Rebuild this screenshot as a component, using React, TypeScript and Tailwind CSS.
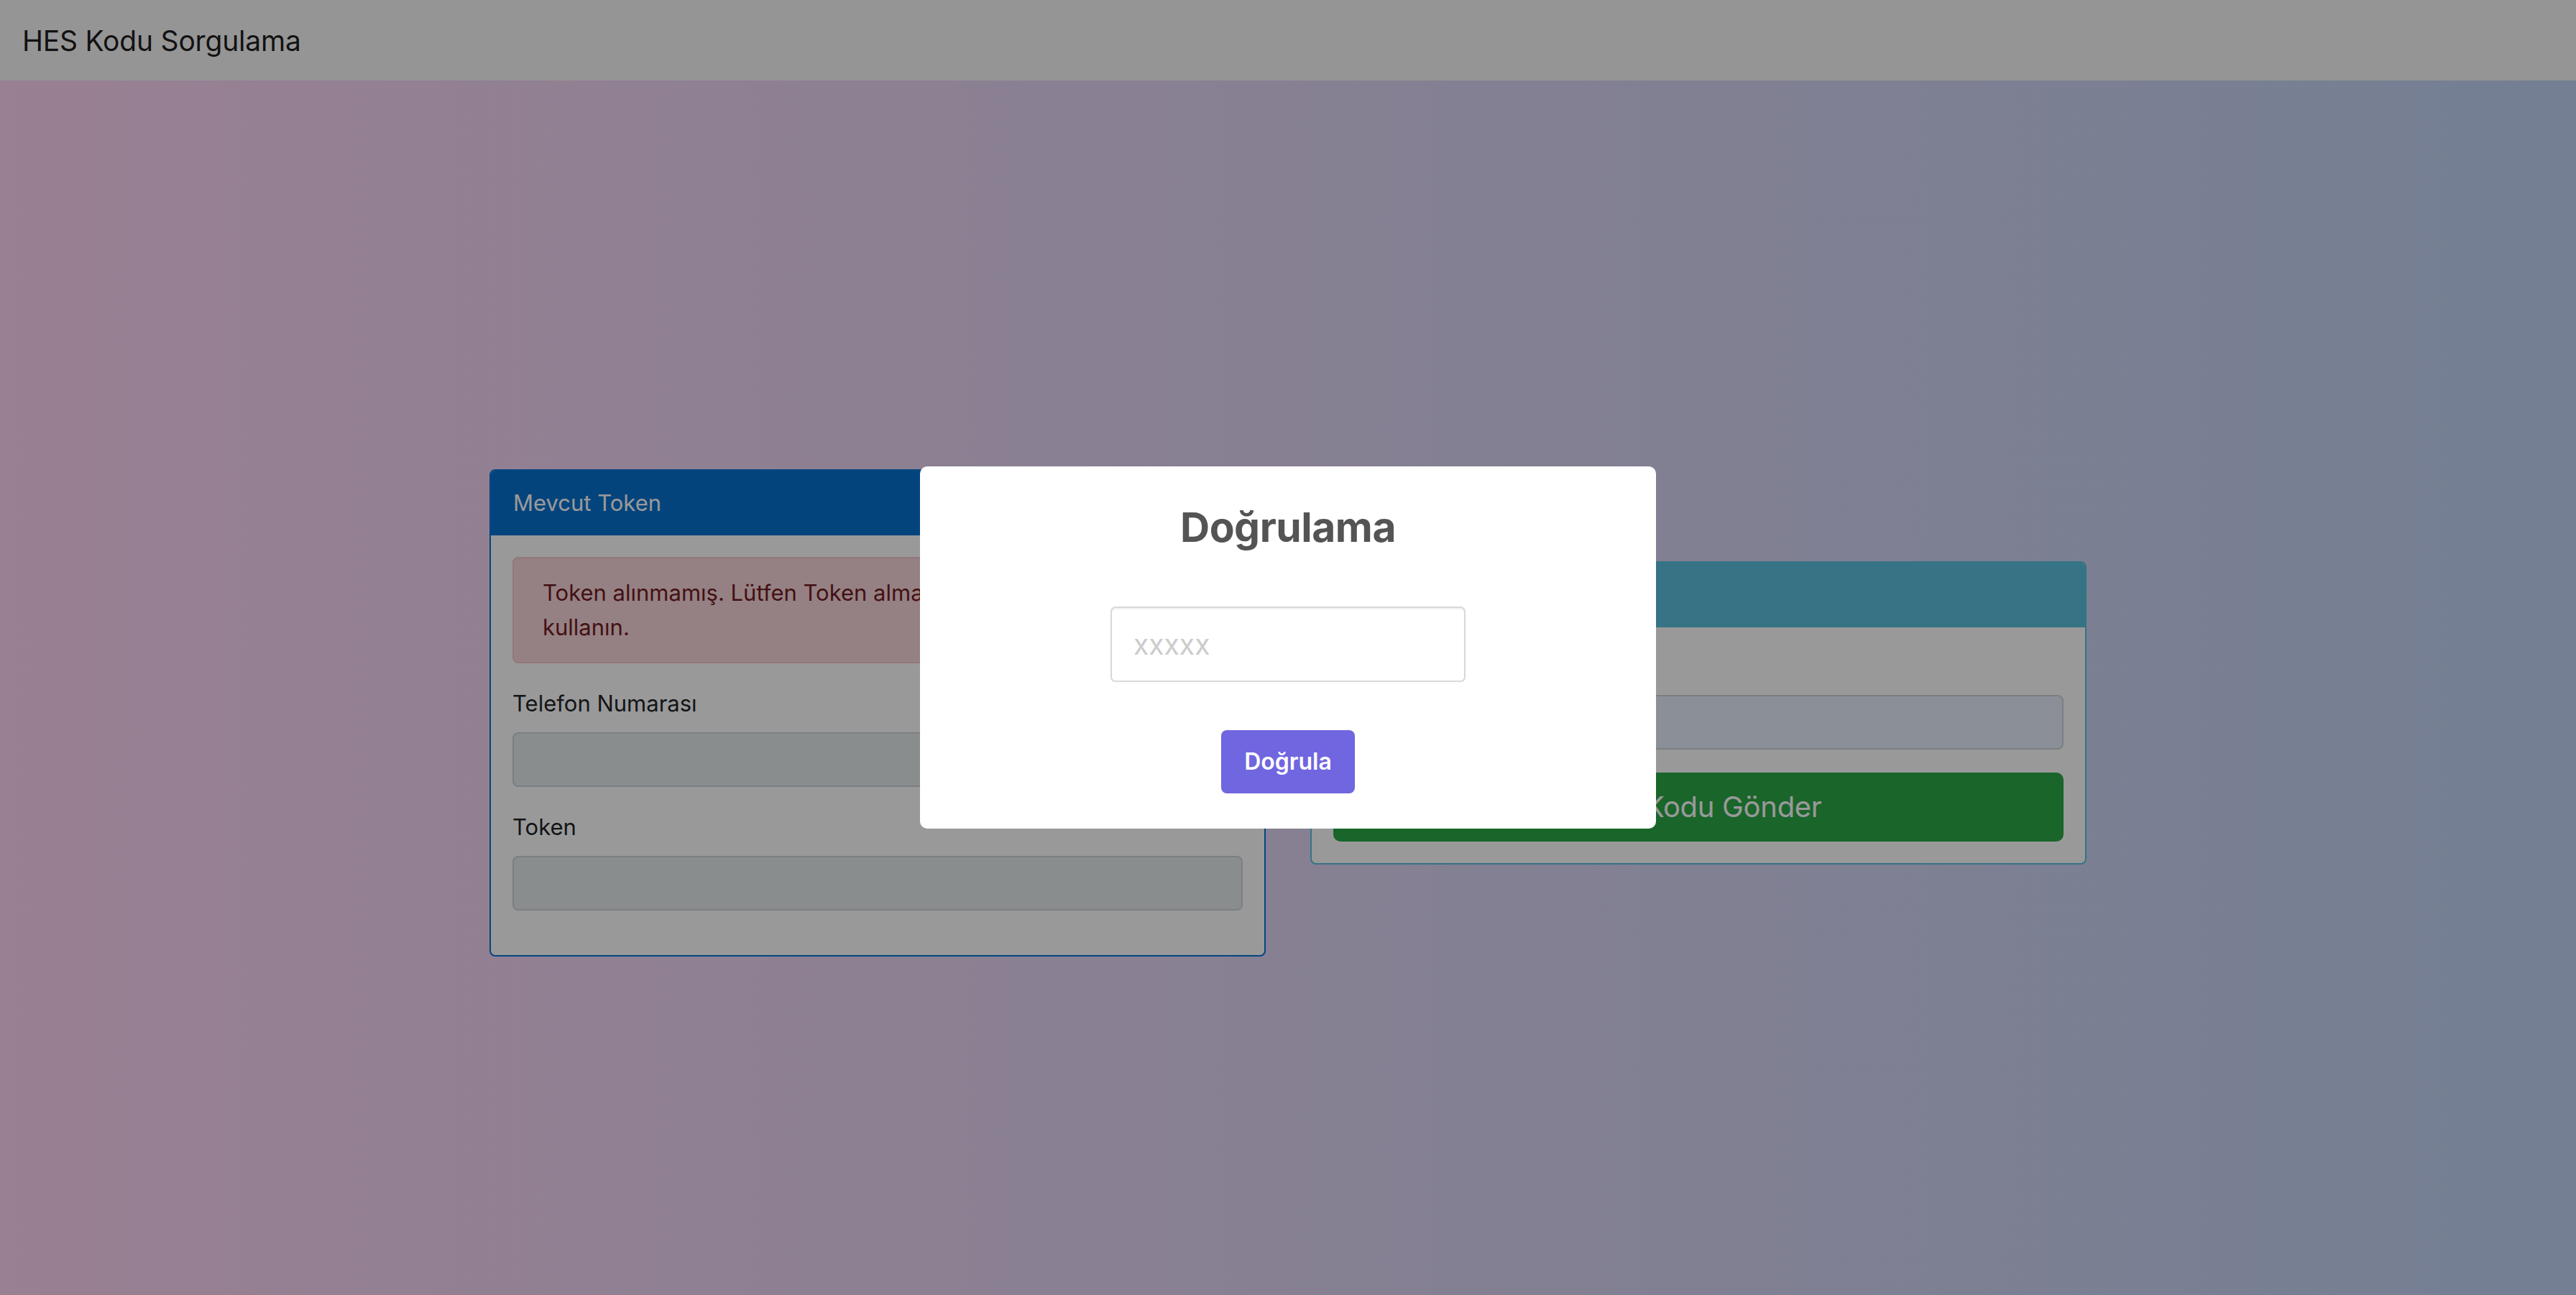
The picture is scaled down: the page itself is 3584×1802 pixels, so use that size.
import React from 'react';

function Navbar() {
  return (
    <nav className="h-[112px] bg-[#f8f9fa] flex items-center pl-[31px]">
      <span className="text-[39px] text-black/90 leading-none tracking-[-0.2px]">HES Kodu Sorgulama</span>
    </nav>
  );
}

function TokenCard() {
  return (
    <div className="w-[1080px] bg-white border-2 border-[#0275d8] rounded-[8px] overflow-hidden">
      <div className="bg-[#0872d0] text-white text-[31px] leading-[48px] px-[31px] py-[21px]">
        Mevcut Token
      </div>
      <div className="p-[30px]">
        <div className="bg-[#f8d7da] border-2 border-[#f5c6cb] text-[#721c24] rounded-[8px] px-[40px] py-[24px] text-[31px] leading-[48px] mb-[32px]">
          Token alınmamış. Lütfen Token almak için SMS formunu
          <br />
          kullanın.
        </div>
        <div className="mb-[32px]">
          <label className="block text-[31px] leading-[48px] text-[#212529] mb-[16px]">Telefon Numarası</label>
          <input
            readOnly
            className="block w-full h-[76px] bg-[#e6ebeb] border-2 border-[#ced4da] rounded-[8px] px-[24px] text-[32px] outline-none"
          />
        </div>
        <div className="mb-[32px]">
          <label className="block text-[31px] leading-[48px] text-[#212529] mb-[16px]">Token</label>
          <input
            readOnly
            className="block w-full h-[76px] bg-[#e6ebeb] border-2 border-[#ced4da] rounded-[8px] px-[24px] text-[32px] outline-none"
          />
        </div>
      </div>
    </div>
  );
}

function SmsCard() {
  return (
    <div className="w-[1080px] bg-white border-2 border-[#5bc0de] rounded-[8px] overflow-hidden">
      <div className="bg-[#5bc0de] text-white text-[31px] leading-[48px] px-[31px] py-[21px]">
        SMS ile Token Al
      </div>
      <div className="p-[30px]">
        <label className="block text-[31px] leading-[48px] text-[#212529] mb-[16px]">Telefon Numarası</label>
        <input
          className="block w-full h-[76px] bg-[#e8f0fe] border-2 border-[#ced4da] rounded-[8px] px-[24px] text-[32px] outline-none mb-[32px]"
        />
        <button className="block w-full h-[96px] bg-[#2aa846] text-white text-[40px] tracking-[-0.3px] rounded-[10px]">
          SMS Kodu Gönder
        </button>
      </div>
    </div>
  );
}

function VerifyModal() {
  return (
    <div className="fixed inset-0 bg-black/40 flex items-center justify-center">
      <div className="w-[1024px] bg-white rounded-[10px] flex flex-col items-center pb-[49px]">
        <h2 className="mt-[48px] text-[57px] leading-[73px] font-bold text-[#545454] tracking-[-0.5px]">Doğrulama</h2>
        <input
          placeholder="xxxxx"
          className="mt-[74px] w-[494px] h-[105px] border-2 border-[#d9d9d9] rounded-[7px] px-[30px] text-[39px] text-[#545454] placeholder:text-[#cccccc] shadow-[inset_0_2px_2px_rgba(0,0,0,0.06)] outline-none"
        />
        <button className="mt-[67px] w-[186px] h-[88px] bg-[#7066e0] text-white text-[32px] font-semibold rounded-[8px]">
          Doğrula
        </button>
      </div>
    </div>
  );
}

export default function App() {
  return (
    <div className="min-h-screen font-['Inter','Noto_Sans',sans-serif]">
      <Navbar />
      <main className="h-[1690px] bg-gradient-to-r from-[#ffd5f4] to-[#c1d4f6] flex items-center justify-center gap-[62px] pt-[70px]">
        <TokenCard />
        <SmsCard />
      </main>
      <VerifyModal />
    </div>
  );
}
